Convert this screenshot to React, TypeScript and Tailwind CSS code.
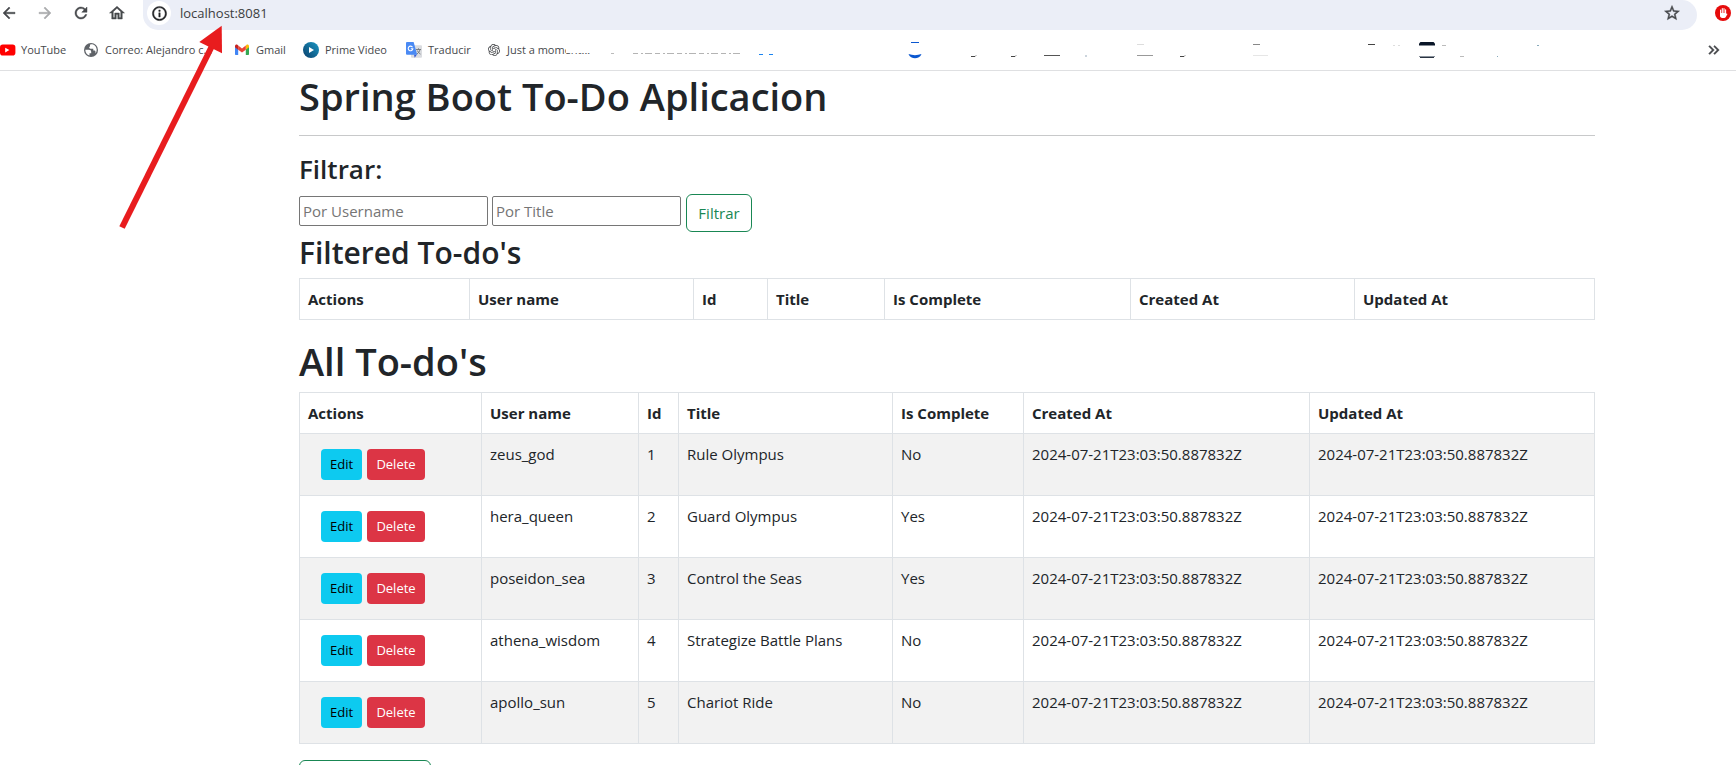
import type { ReactNode } from "react";
import { SiOpenai } from "react-icons/si";
import {
  MdArrowBack,
  MdArrowForward,
  MdInfoOutline,
  MdKeyboardDoubleArrowRight,
  MdOutlineHome,
  MdRefresh,
  MdStarBorder,
} from "react-icons/md";

type Todo = {
  id: number;
  username: string;
  title: string;
  complete: boolean;
  createdAt: string;
  updatedAt: string;
};

const STAMP = "2024-07-21T23:03:50.887832Z";

const todos: Todo[] = [
  { id: 1, username: "zeus_god", title: "Rule Olympus", complete: false, createdAt: STAMP, updatedAt: STAMP },
  { id: 2, username: "hera_queen", title: "Guard Olympus", complete: true, createdAt: STAMP, updatedAt: STAMP },
  { id: 3, username: "poseidon_sea", title: "Control the Seas", complete: true, createdAt: STAMP, updatedAt: STAMP },
  { id: 4, username: "athena_wisdom", title: "Strategize Battle Plans", complete: false, createdAt: STAMP, updatedAt: STAMP },
  { id: 5, username: "apollo_sun", title: "Chariot Ride", complete: false, createdAt: STAMP, updatedAt: STAMP },
];

const columns = ["Actions", "User name", "Id", "Title", "Is Complete", "Created At", "Updated At"];

const filteredWidths = ["w-[170px]", "w-[224px]", "w-[74px]", "w-[117px]", "w-[246px]", "w-[224px]", "w-[240px]"];
const allWidths = ["w-[182px]", "w-[157px]", "w-[40px]", "w-[214px]", "w-[131px]", "w-[286px]", "w-[285px]"];

/* Thickens the glyph only, not the transparent bounding path of the icon. */
const bold = "stroke-[0.6] [&>path[fill=none]]:stroke-none";

function YouTubeIcon() {
  return (
    <svg width="16" height="16" viewBox="0 0 16 16" aria-hidden="true">
      <rect x="0" y="2.6" width="15.4" height="11" rx="2.8" fill="#ff0000" />
      <path d="M5.200 5.800v4.600l4.200-2.300z" fill="#fff" />
    </svg>
  );
}

function GlobeIcon() {
  return (
    <svg width="16" height="16" viewBox="0 0 16 16" aria-hidden="true">
      <circle cx="8" cy="8" r="7" fill="#5f6368" />
      <path d="M2.300 7.800h3.600c1.600 0 2.300.8 2.300 2.200v1.200H6.500v2.400C4 13 2.300 10.500 2.300 7.800z" fill="#fff" />
      <path d="M7 4.500V3.200c0-.6.600-1 1.200-1h1.300c2.400.6 4.200 2.900 4.200 5.600 0 1.400-.4 2.600-1.200 3.600v-1.600c0-.8-.6-1.200-1.400-1.200h-.8V6.700H7.500c-.8 0-1.300-.5-1.300-1.100 0-.7.300-1.100.8-1.100z" fill="#fff" />
    </svg>
  );
}

function GmailIcon() {
  return (
    <svg width="14" height="14" viewBox="0 0 14 14" aria-hidden="true">
      <path d="M0 3.4v7.7c0 .6.4 1 1 1h2.2V5.8z" fill="#4285f4" />
      <path d="M14 3.4v7.7c0 .6-.4 1-1 1h-2.2V5.8z" fill="#34a853" />
      <path d="M10.800 2.700V6.700L14 4.300V3.200c0-1.500-1.600-2.100-2.600-1.300z" fill="#fbbc04" />
      <path d="M3.200 6.700V2.500L7 5.400l3.800-2.900v4.200L7 9.500z" fill="#ea4335" />
      <path d="M0 3.200v1.100l3.200 2.400V2.500l-.6-.5C1.600 1.100 0 1.800 0 3.200z" fill="#c5221f" />
    </svg>
  );
}

function PrimeIcon() {
  return (
    <svg width="16" height="16" viewBox="0 0 16 16" aria-hidden="true">
      <defs>
        <linearGradient id="prime" x1="0" y1="1" x2="1" y2="0">
          <stop offset="0" stopColor="#0b3f6b" />
          <stop offset="1" stopColor="#1a98c4" />
        </linearGradient>
      </defs>
      <circle cx="8" cy="8" r="8" fill="url(#prime)" />
      <path d="M6 5v6l5-3z" fill="#fff" />
    </svg>
  );
}

function TranslateIcon() {
  return (
    <svg width="16" height="16" viewBox="0 0 16 16" aria-hidden="true">
      <rect x="5" y="3.300" width="11" height="12.500" rx="1" fill="#dadce0" />
      <path d="M8 12.600h3l-2.300 3.200z" fill="#3a5bd0" />
      <path d="M1 0h6.600l3.600 12.800H1a1 1 0 0 1-1-1V1a1 1 0 0 1 1-1z" fill="#4a8af4" />
      <path d="M6.500 5.200A2.300 2.300 0 1 0 6.800 6.800H4.800" fill="none" stroke="#fff" strokeWidth="1.100" />
      <path d="M10 7.500h5M12.500 6.300v1.200M14 7.500c-.4 2-1.600 3.500-3 4.500M11.300 8.500c.6 1.500 1.800 2.800 3.200 3.600" fill="none" stroke="#70757a" strokeWidth="0.900" />
    </svg>
  );
}

function AdBlockIcon() {
  return (
    <svg width="16" height="16" viewBox="0 0 16 16" aria-hidden="true">
      <circle cx="8" cy="8" r="8" fill="#e60b0b" />
      <path d="M5.600 5v4M7.300 3.500v5M9 3.500v5M10.600 4.700v4" stroke="#fff" strokeWidth="1.100" strokeLinecap="round" />
      <path d="M5 8h6.200v1.200l.5-.6.800.5-1.700 2.900c-.4.600-.9.900-1.600.9H7.300C5.900 12.900 5 12 5 10.700z" fill="#fff" />
    </svg>
  );
}

/* Leftover pixels of the bookmarks that are blanked out on the bar. */
function ErasedBookmarks() {
  return (
    <svg className="pointer-events-none absolute left-0 top-0" width="1560" height="40" viewBox="0 30 1560 40" aria-hidden="true">
      <path d="M566 38h40v20h-12v-5h-28z" fill="#fff" />
      <path d="M611 53.500h3" stroke="#bbb" />
      <path d="M633 53.500h108" stroke="#b4b4b4" strokeDasharray="5 3 2 2 7 3" />
      <path d="M759 54.500h4M769 54.500h4" stroke="#1a84f0" />
      <path d="M911 42.500h8" stroke="#0b57d0" />
      <path d="M908.500 54c4 1.500 9 1.500 13 0-1 3-4 4.200-6.500 4.200s-5.500-1.200-6.500-4.200z" fill="#0b57d0" />
      <path d="M971 56.500h4l1-1M1011 56.500h4l1-1M1180 56.500h4l1-1" stroke="#444" fill="none" />
      <path d="M1044 55.500h16" stroke="#555" />
      <path d="M1085 56h2" stroke="#9ab" />
      <path d="M1137 55.500h16" stroke="#999" />
      <path d="M1137 44.500h7" stroke="#ddd" />
      <path d="M1253 44.500h7" stroke="#888" />
      <path d="M1253 55.500h15" stroke="#e6e6e6" />
      <path d="M1368 44.500h7" stroke="#444" />
      <path d="M1393 45.500h2M1398 45.500h2" stroke="#ddd" />
      <path d="M1419 45.500v-2l1.500-1.500h13l1.500 1.500v2z" fill="#0a1628" />
      <path d="M1419 56.500h16" stroke="#8a929c" />
      <path d="M1420 57.500h14" stroke="#2a3442" />
      <path d="M1442 45.500h4M1460 56.500h4" stroke="#bbb" />
      <path d="M1497 56.500h1M1537 45.500h2" stroke="#8ab" />
    </svg>
  );
}

function Bookmark({ icon, label, className }: { icon: ReactNode; label: string; className: string }) {
  return (
    <a href="#" className={`flex shrink-0 items-center whitespace-nowrap ${className}`}>
      {icon}
      <span>{label}</span>
    </a>
  );
}

function BrowserBar() {
  return (
    <header className="relative shrink-0 border-b border-[#dfe0e2] bg-white text-[#46484b]">
      <div className="flex h-[30px] items-start">
        <nav className="flex h-[26px] w-[143px] shrink-0 items-center gap-[18px]" aria-label="Navigation">
          <button type="button" aria-label="Back"><MdArrowBack size={18} className={bold} /></button>
          <button type="button" aria-label="Forward" className="text-[#a9abad]"><MdArrowForward size={18} className={bold} /></button>
          <button type="button" aria-label="Reload"><MdRefresh size={18} className={bold} /></button>
          <button type="button" aria-label="Home"><MdOutlineHome size={18} className={bold} /></button>
        </nav>
        <div className="mr-[18px] flex h-[30px] grow items-start rounded-b-[17px] rounded-tr-[17px] bg-[#ebeef7] pl-1 pr-4">
          <span className="mt-[1px] flex size-6 items-center justify-center rounded-full bg-white text-[#202124]">
            <MdInfoOutline size={17} className={bold} />
          </span>
          <input
            aria-label="Address"
            defaultValue="localhost:8081"
            className="ml-[9px] h-[26px] grow bg-transparent text-[13px] text-[#3c3d40] outline-none"
          />
          <button type="button" aria-label="Bookmark this page" className="flex h-[26px] items-center">
            <MdStarBorder size={18} className={bold} />
          </button>
        </div>
        <span className="mr-[5px] flex h-[26px] items-center"><AdBlockIcon /></span>
      </div>
      <div className="relative flex h-10 items-center text-[11px]">
        <Bookmark icon={<YouTubeIcon />} label="YouTube" className="w-[83px] gap-[5px]" />
        <Bookmark icon={<GlobeIcon />} label="Correo: Alejandro c..." className="w-[152px] gap-[6px]" />
        <Bookmark icon={<GmailIcon />} label="Gmail" className="w-[68px] gap-[7px]" />
        <Bookmark icon={<PrimeIcon />} label="Prime Video" className="w-[103px] gap-[6px]" />
        <Bookmark icon={<TranslateIcon />} label="Traducir" className="w-[82px] gap-[6px]" />
        <Bookmark icon={<SiOpenai size={12} />} label="Just a moment..." className="gap-[7px]" />
        <ErasedBookmarks />
        <button type="button" aria-label="More bookmarks" className="ml-auto mr-[13px]">
          <MdKeyboardDoubleArrowRight size={18} className={bold} />
        </button>
      </div>
    </header>
  );
}

function HeadRow() {
  return (
    <thead>
      <tr>
        {columns.map((name) => (
          <th key={name} className="border border-[#dee2e6] p-2 text-left font-bold">{name}</th>
        ))}
      </tr>
    </thead>
  );
}

function Columns({ widths }: { widths: string[] }) {
  return (
    <colgroup>
      {widths.map((width, index) => (
        <col key={index} className={width} />
      ))}
    </colgroup>
  );
}

function TodoRow({ todo }: { todo: Todo }) {
  const cell = "border border-[#dee2e6] p-2 align-top";
  return (
    <tr className="odd:bg-[#f2f2f2]">
      <td className={cell}>
        <div className="flex gap-[5px] px-[13px] py-[7px] text-[13px] leading-[21px]">
          <button type="button" className="h-[31px] w-[41px] rounded bg-[#0dcaf0] text-black">Edit</button>
          <button type="button" className="h-[31px] w-[58px] rounded bg-[#dc3545] text-white">Delete</button>
        </div>
      </td>
      <td className={cell}>{todo.username}</td>
      <td className={cell}>{todo.id}</td>
      <td className={cell}>{todo.title}</td>
      <td className={cell}>{todo.complete ? "Yes" : "No"}</td>
      <td className={cell}>{todo.createdAt}</td>
      <td className={cell}>{todo.updatedAt}</td>
    </tr>
  );
}

function PointerArrow() {
  return (
    <svg className="pointer-events-none absolute left-[110px] top-5" width="120" height="215" viewBox="110 20 120 215" aria-hidden="true">
      <path d="M122 227.500L212 46" stroke="#e81c1e" strokeWidth="6" />
      <path d="M221.700 25.700L199.300 42L222 53.300z" fill="#e81c1e" />
    </svg>
  );
}

export default function App() {
  const input = "mt-[2px] h-[30px] w-[189px] rounded-[2px] border border-[#767676] bg-white px-[3px] outline-none placeholder:text-[#757575]";
  return (
    <div className="relative flex h-screen flex-col overflow-hidden bg-white font-['Open_Sans',sans-serif] text-[15px] leading-6 text-[#212529]">
      <BrowserBar />
      <main className="pl-[299px] pr-[141px]">
        <h1 className="text-[38px] font-semibold leading-[50px]">Spring Boot To-Do Aplicacion</h1>
        <hr className="mb-4 mt-[14px] border-[#c8c9ca]" />
        <h3 className="mb-2 text-[26px] font-semibold leading-[34px]">Filtrar:</h3>
        <form className="flex h-[38px] items-start gap-1" onSubmit={(event) => event.preventDefault()}>
          <input aria-label="Username" placeholder="Por Username" className={input} />
          <input aria-label="Title" placeholder="Por Title" className={input} />
          <button type="submit" className="ml-[1px] h-[38px] w-[66px] rounded-md border border-[#198754] text-[#198754]">Filtrar</button>
        </form>
        <h2 className="mb-1 text-[30px] font-semibold leading-[42px]">Filtered To-do's</h2>
        <table className="mb-4 w-full table-fixed border-collapse">
          <Columns widths={filteredWidths} />
          <HeadRow />
        </table>
        <h1 className="mb-[6px] text-[38px] font-semibold leading-[50px]">All To-do's</h1>
        <table className="mb-4 w-full table-fixed border-collapse">
          <Columns widths={allWidths} />
          <HeadRow />
          <tbody>
            {todos.map((todo) => (
              <TodoRow key={todo.id} todo={todo} />
            ))}
          </tbody>
        </table>
        <button type="button" aria-label="Add" className="h-[38px] w-[132px] rounded-md border border-[#198754]" />
      </main>
      <PointerArrow />
    </div>
  );
}
